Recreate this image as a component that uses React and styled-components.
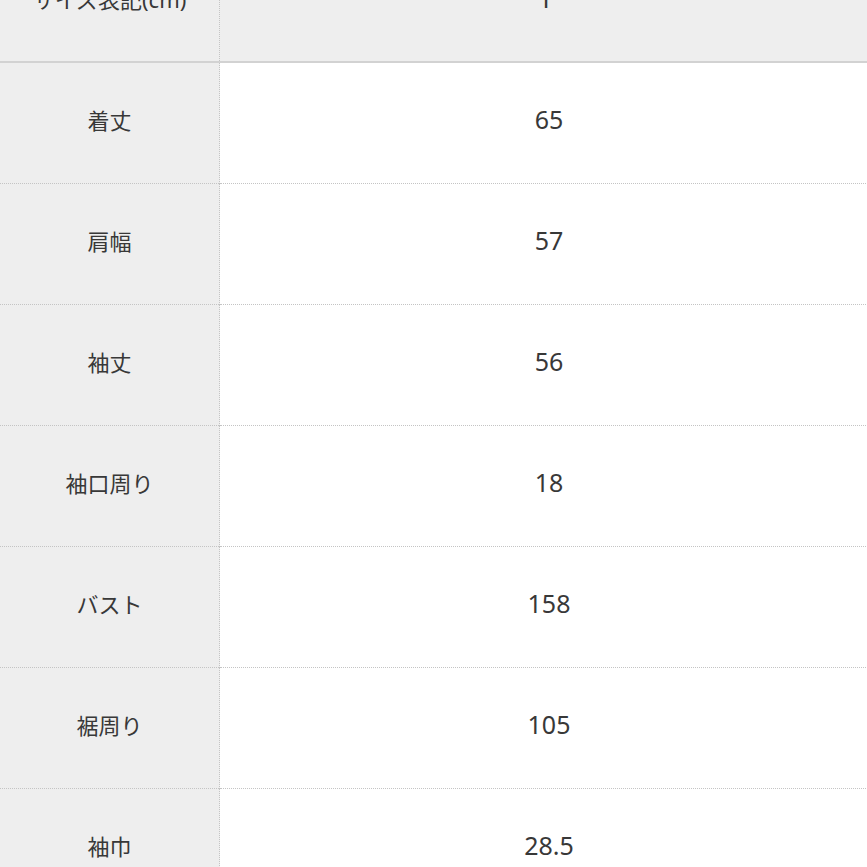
import React from "react";
import styled, { createGlobalStyle } from "styled-components";

const rows = [
  { label: "着丈", value: "65" },
  { label: "肩幅", value: "57" },
  { label: "袖丈", value: "56" },
  { label: "袖口周り", value: "18" },
  { label: "バスト", value: "158" },
  { label: "裾周り", value: "105" },
  { label: "袖巾", value: "28.5" },
];

const GlobalStyle = createGlobalStyle`
  html, body {
    margin: 0;
    padding: 0;
    background: #ffffff;
    overflow: hidden;
  }
`;

const Page = styled.div`
  width: 867px;
  height: 867px;
  overflow: hidden;
  background: #fff;
`;

const Table = styled.table`
  width: 878px;
  margin-top: -58px;
  border-collapse: collapse;
  table-layout: fixed;
  font-family: "Noto Sans", "Noto Sans CJK JP", sans-serif;
  color: #383838;
`;

const Row = styled.tr`
  height: ${(p) => (p.$head ? "120px" : "121px")};
  border-bottom: ${(p) => (p.$head ? "2px solid #d2d2d2" : "1px dotted #c4c4c4")};
  background: ${(p) => (p.$head ? "#eeeeee" : "transparent")};
`;

const Label = styled.th`
  width: 219px;
  padding: 0 0 8px;
  text-align: center;
  font-weight: 400;
  font-size: 22px;
  background: #eeeeee;
  border-right: 1px dotted #c4c4c4;
`;

const Value = styled.td`
  padding: 0 0 8px;
  text-align: center;
  font-size: 25px;
`;

export default function App() {
  return (
    <>
      <GlobalStyle />
      <Page>
        <Table>
          <tbody>
            <Row $head>
              <Label>サイズ表記(cm)</Label>
              <Value>F</Value>
            </Row>
            {rows.map((r) => (
              <Row key={r.label}>
                <Label>{r.label}</Label>
                <Value>{r.value}</Value>
              </Row>
            ))}
          </tbody>
        </Table>
      </Page>
    </>
  );
}
